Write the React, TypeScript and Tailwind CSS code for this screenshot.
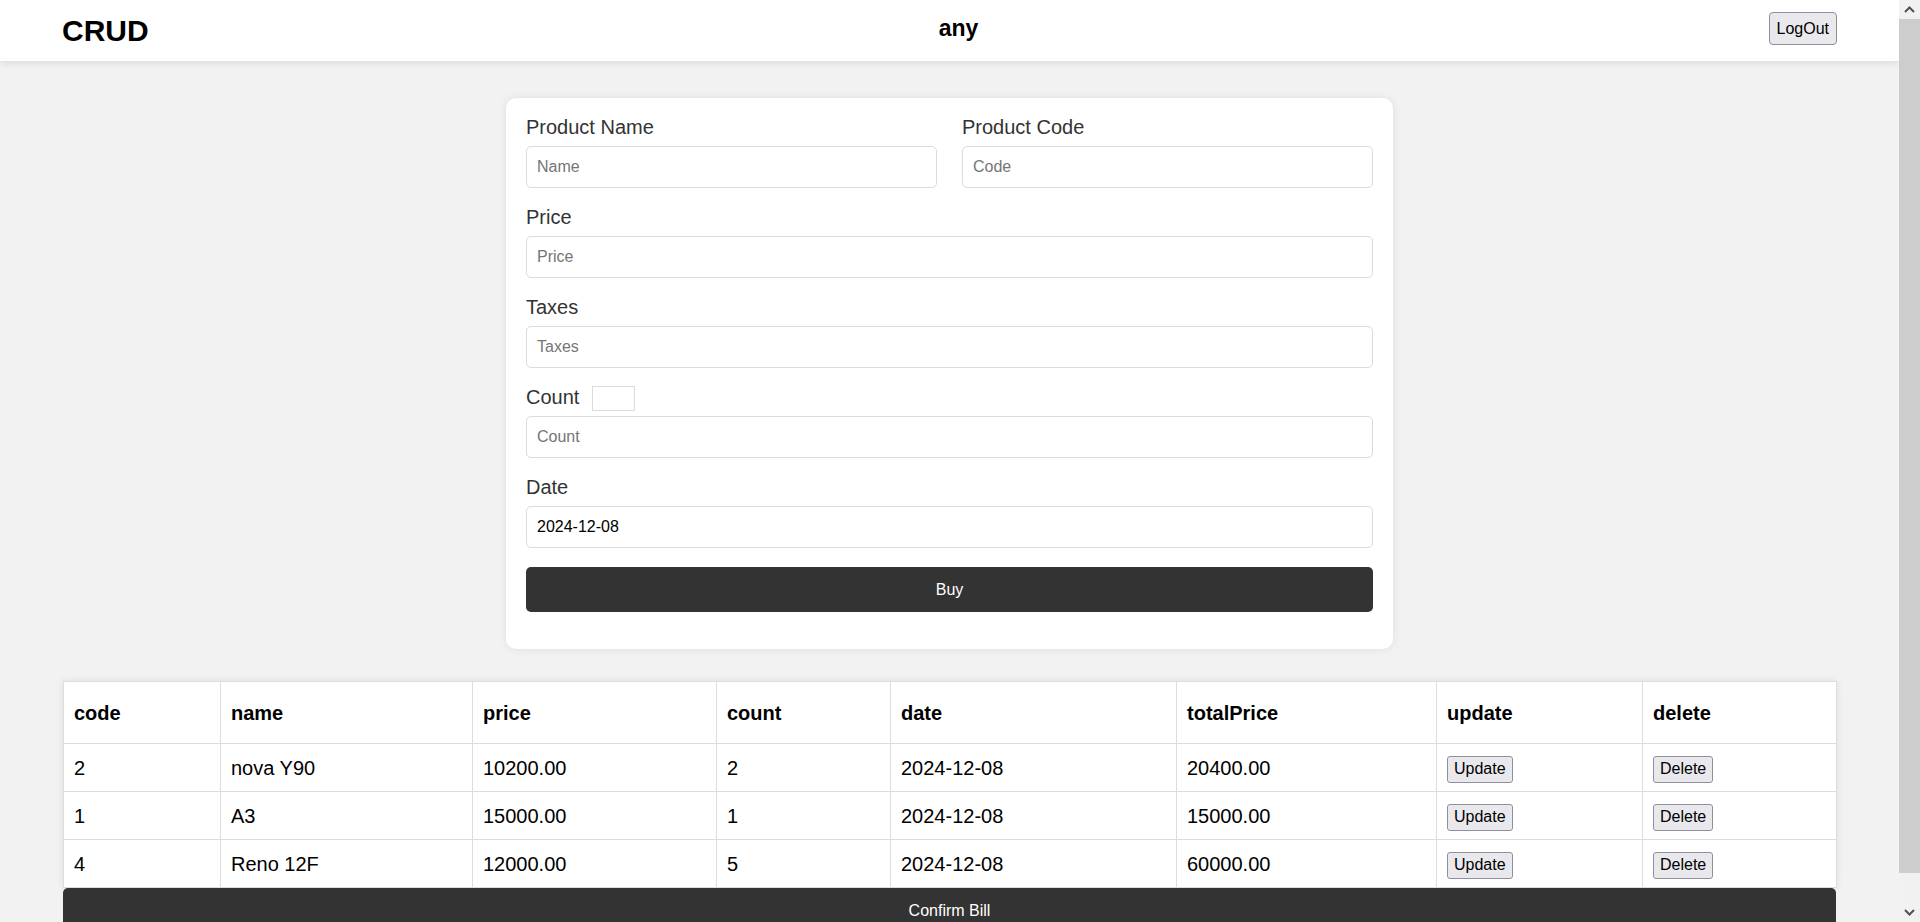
import React from "react";

const rows = [
  { code: "2", name: "nova Y90", price: "10200.00", count: "2", date: "2024-12-08", total: "20400.00" },
  { code: "1", name: "A3", price: "15000.00", count: "1", date: "2024-12-08", total: "15000.00" },
  { code: "4", name: "Reno 12F", price: "12000.00", count: "5", date: "2024-12-08", total: "60000.00" },
];

const cols = [
  { key: "code", w: 157 },
  { key: "name", w: 252 },
  { key: "price", w: 244 },
  { key: "count", w: 174 },
  { key: "date", w: 286 },
  { key: "totalPrice", w: 260 },
  { key: "update", w: 206 },
  { key: "delete", w: 194 },
];

const inputCls =
  "block w-full h-[42px] rounded-[5px] border border-[#dcdcdc] bg-white px-[10px] text-[16px] text-black placeholder:text-[#757575] outline-none";
const labelCls = "block h-[23px] leading-[23px] text-[20px] text-[#333] mb-[7px]";
const smallBtn =
  "h-[27px] px-[6px] rounded-[3px] border border-[#8f8f9d] bg-[#e9e9ed] text-[16px] leading-none text-black";
const cell = "border border-[#dddddd] px-[10px] text-[20px]";

function Field({ label, placeholder, value }: { label: string; placeholder: string; value?: string }) {
  return (
    <div className="mb-[18px]">
      <label className={labelCls}>{label}</label>
      <input className={inputCls} placeholder={placeholder} defaultValue={value} />
    </div>
  );
}

// the browser's own scrollbar strip, as seen in the screenshot
function ScrollStrip() {
  return (
    <aside className="w-[21px] h-screen shrink-0 bg-[#f1f1f1] flex flex-col">
      <div className="h-[19px] flex items-center justify-center">
        <svg width="11" height="7" viewBox="0 0 11 7">
          <polyline points="1,6 5.5,1.5 10,6" fill="none" stroke="#505050" strokeWidth="2" />
        </svg>
      </div>
      <div className="h-[854px] bg-[#cdcdcd]" />
      <div className="flex-1" />
      <div className="h-[20px] flex items-center justify-center">
        <svg width="11" height="7" viewBox="0 0 11 7">
          <polyline points="1,1 5.5,5.5 10,1" fill="none" stroke="#505050" strokeWidth="2" />
        </svg>
      </div>
    </aside>
  );
}

export default function App() {
  return (
    <div className="flex h-screen overflow-hidden bg-[#f2f2f2] font-['Liberation_Sans',Arial,sans-serif] text-black">
      <div className="flex-1 min-w-0 h-screen overflow-hidden">
        <header className="h-[61px] bg-white shadow-[0_2px_8px_rgba(0,0,0,0.1)] flex items-center justify-between px-[62px]">
          <h1 className="text-[30px] font-bold leading-none">CRUD</h1>
          <h2 className="text-[23px] font-bold leading-none -mt-[4px]">any</h2>
          <button className="h-[33px] px-[7px] rounded-[4px] border border-[#8f8f9d] bg-[#e9e9ed] text-[16px] text-black -mt-[4px]">
            LogOut
          </button>
        </header>

        <main className="pt-[37px] pb-[24px]">
          <form className="mx-auto w-[887px] bg-white rounded-[10px] shadow-[0_0_10px_rgba(0,0,0,0.08)] px-5 pt-[18px] pb-[37px]">
            <div className="grid grid-cols-2 gap-x-[25px]">
              <Field label="Product Name" placeholder="Name" />
              <Field label="Product Code" placeholder="Code" />
            </div>
            <Field label="Price" placeholder="Price" />
            <Field label="Taxes" placeholder="Taxes" />
            <div className="mb-[18px]">
              <div className="flex items-start h-[23px] mb-[7px]">
                <label className="leading-[23px] text-[20px] text-[#333]">Count</label>
                <span className="ml-[13px] w-[43px] h-[25px] border border-[#dcdcdc] bg-white shrink-0" />
              </div>
              <input className={inputCls} placeholder="Count" />
            </div>
            <Field label="Date" placeholder="Date" value="2024-12-08" />
            <button
              type="button"
              className="block w-full h-[45px] mt-[19px] rounded-[5px] bg-[#333] text-white text-[16px]"
            >
              Buy
            </button>
          </form>

          <div className="mt-[32px] mx-[63px]">
            <table className="table-fixed border-collapse bg-white w-full shadow-[0_0_8px_rgba(0,0,0,0.08)]">
              <colgroup>
                {cols.map((c) => (
                  <col key={c.key} style={{ width: c.w }} />
                ))}
              </colgroup>
              <thead>
                <tr className="h-[62px]">
                  {cols.map((c) => (
                    <th key={c.key} className={cell + " text-left font-bold"}>
                      {c.key}
                    </th>
                  ))}
                </tr>
              </thead>
              <tbody>
                {rows.map((r) => (
                  <tr key={r.code} className="h-[48px]">
                    <td className={cell}>{r.code}</td>
                    <td className={cell}>{r.name}</td>
                    <td className={cell}>{r.price}</td>
                    <td className={cell}>{r.count}</td>
                    <td className={cell}>{r.date}</td>
                    <td className={cell}>{r.total}</td>
                    <td className={cell}>
                      <button className={smallBtn}>Update</button>
                    </td>
                    <td className={cell}>
                      <button className={smallBtn}>Delete</button>
                    </td>
                  </tr>
                ))}
              </tbody>
            </table>
            <button
              type="button"
              className="block w-full h-[45px] rounded-[5px] bg-[#333] text-white text-[16px]"
            >
              Confirm Bill
            </button>
          </div>
        </main>
      </div>
      <ScrollStrip />
    </div>
  );
}
